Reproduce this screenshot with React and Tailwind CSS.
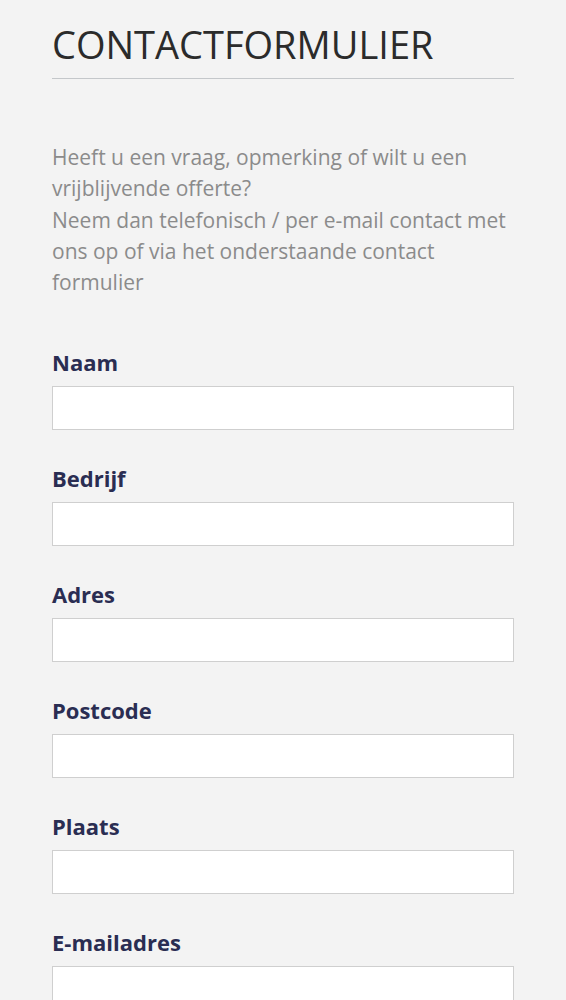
const fields = ["Naam", "Bedrijf", "Adres", "Postcode", "Plaats", "E-mailadres"];

export default function App() {
  return (
    <div className="min-h-screen bg-[#f3f3f3] px-[52px] pt-[20px] font-['Open_Sans',sans-serif]">
      <h1 className="text-[38px] leading-[48px] text-[#2b2b2b] pb-[10px] border-b border-[#c4c7ca]">
        CONTACTFORMULIER
      </h1>

      <p className="mt-[63px] text-[21px] leading-[31.3px] text-[#8b8b8b]">
        Heeft u een vraag, opmerking of wilt u een vrijblijvende offerte?
        <br />
        Neem dan telefonisch / per e-mail contact met ons op of via het onderstaande contact formulier
      </p>

      <form className="mt-[50px] flex flex-col gap-[34px]">
        {fields.map((f) => (
          <div key={f} className="flex flex-col gap-[10px]">
            <label className="text-[22px] leading-[28px] font-bold text-[#2a2d52]">{f}</label>
            <input
              type="text"
              className="h-[44px] w-full bg-white border border-[#cfcfcf] outline-none px-3"
            />
          </div>
        ))}
      </form>
    </div>
  );
}
